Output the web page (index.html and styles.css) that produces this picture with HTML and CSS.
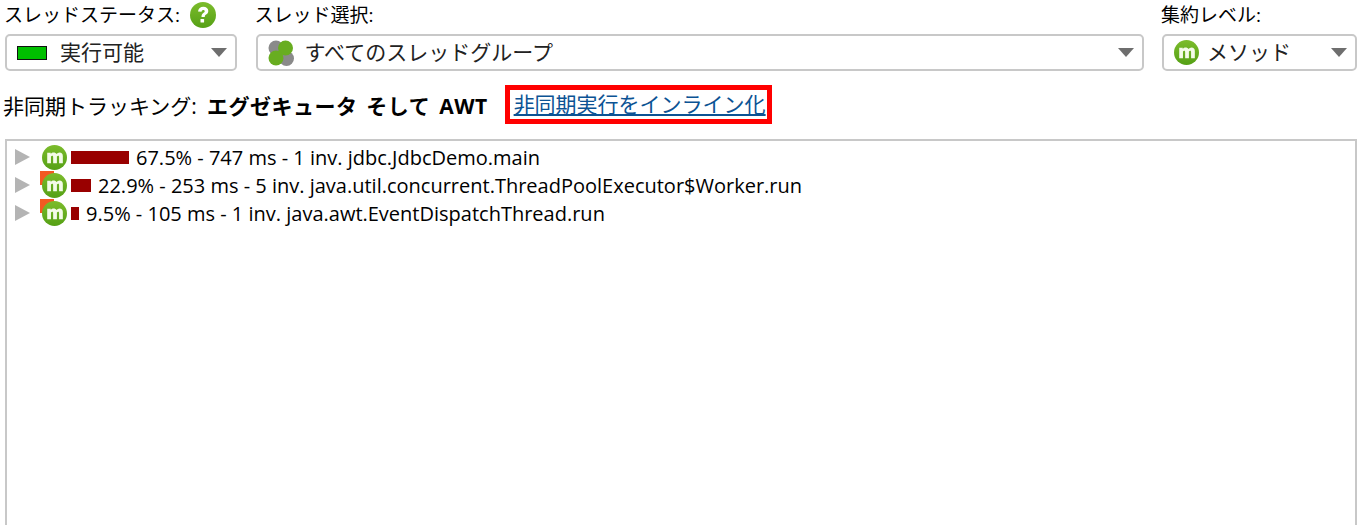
FILE: index.html
```html
<!DOCTYPE html>
<html lang="ja">
<head>
  <meta charset="UTF-8" />
  <title>スレッド</title>
  <link rel="stylesheet" href="styles.css">
</head>
<body>
  <svg class="defs" width="0" height="0" aria-hidden="true">
    <defs>
      <linearGradient id="green" x1="0" y1="0" x2="0" y2="1">
        <stop offset="0" stop-color="#7cbc2c"/>
        <stop offset="1" stop-color="#55a015"/>
      </linearGradient>
      <symbol id="method" viewBox="0 0 24 24">
        <circle cx="12" cy="12" r="12" fill="url(#green)"/>
        <path d="M5 17.500V7.500h3.400v1.100c.8-.9 1.700-1.300 2.800-1.300 1.200 0 2.100.5 2.600 1.400.9-.9 1.900-1.400 3-1.400 2.100 0 3.200 1.200 3.200 3.300v6.900h-3.600v-6c0-.8-.3-1.200-.9-1.200-.5 0-.9.300-1.200.7v6.500h-3.600v-6c0-.8-.3-1.200-.9-1.200-.5 0-.9.300-1.200.7v6.500z" fill="#f4fbe9"/>
      </symbol>
    </defs>
  </svg>

  <section class="filters">
    <div class="filter">
      <div class="filter-label">
        スレッドステータス:
        <svg class="help" viewBox="0 0 26 26" aria-hidden="true">
          <circle cx="13" cy="13" r="13" fill="url(#green)"/>
          <path d="M8 9.500c.3-3 2.500-4.700 5.300-4.700 3 0 5 1.700 5 4.200 0 1.800-1 2.800-2.200 3.600-1 .7-1.300 1.200-1.300 2.400h-3.300c-.1-2 .5-3 1.800-4 .9-.7 1.400-1.100 1.400-1.800 0-.8-.6-1.300-1.500-1.300-1 0-1.500.7-1.600 1.900z" fill="#fff"/>
          <rect x="10.500" y="17" width="3.600" height="3.600" rx=".6" fill="#fff"/>
        </svg>
      </div>
      <div class="combo">
        <span class="state-swatch"></span>
        <span class="combo-text">実行可能</span>
        <span class="caret"></span>
      </div>
    </div>
    <div class="filter">
      <div class="filter-label">スレッド選択:</div>
      <div class="combo">
        <svg class="groups" viewBox="0 0 26 26" aria-hidden="true">
          <circle cx="8" cy="8" r="7.500" fill="#8a8a8a"/>
          <circle cx="18.500" cy="18.500" r="7.500" fill="#8a8a8a"/>
          <circle cx="17.500" cy="8" r="7.500" fill="#68ad20"/>
          <circle cx="8" cy="18" r="7.500" fill="#68ad20"/>
        </svg>
        <span class="combo-text">すべてのスレッドグループ</span>
        <span class="caret"></span>
      </div>
    </div>
    <div class="filter">
      <div class="filter-label">集約レベル:</div>
      <div class="combo">
        <svg class="icon-m" aria-hidden="true"><use href="#method"/></svg>
        <span class="combo-text">メソッド</span>
        <span class="caret"></span>
      </div>
    </div>
  </section>

  <section class="async-row">
    <span>非同期トラッキング:</span>
    <b class="async-value">エグゼキュータ そして AWT</b>
    <span class="highlight"><a href="#">非同期実行をインライン化</a></span>
  </section>

  <section class="tree">
    <div class="node">
      <span class="arrow"></span>
      <span class="node-icon"><svg class="icon-m" aria-hidden="true"><use href="#method"/></svg></span>
      <span class="bar bar-1"></span>
      <span>67.5% - 747 ms - 1 inv. jdbc.JdbcDemo.main</span>
    </div>
    <div class="node">
      <span class="arrow"></span>
      <span class="node-icon async"><svg class="icon-m" aria-hidden="true"><use href="#method"/></svg></span>
      <span class="bar bar-2"></span>
      <span>22.9% - 253 ms - 5 inv. java.util.concurrent.ThreadPoolExecutor$Worker.run</span>
    </div>
    <div class="node">
      <span class="arrow"></span>
      <span class="node-icon async"><svg class="icon-m" aria-hidden="true"><use href="#method"/></svg></span>
      <span class="bar bar-3"></span>
      <span>9.5% - 105 ms - 1 inv. java.awt.EventDispatchThread.run</span>
    </div>
  </section>
</body>
</html>
```

FILE: styles.css
```css
* {
  margin: 0; padding: 0; box-sizing: border-box;
  font-family: 'Open Sans', 'Noto Sans CJK JP', sans-serif;
}
html, body {
  height: 525px;
  overflow: hidden;
}
body {
  display: flex;
  flex-direction: column;
  padding: 0 2px 0 5px;
  background: #fff;
  color: #000;
}
.defs {
  position: absolute;
}
/* top filters */
.filters {
  display: grid;
  grid-template-columns: 232px 888px 195px;
  column-gap: 18.5px;
}
.filter-label {
  display: flex;
  align-items: center;
  gap: 10px;
  height: 34px;
  margin-left: -1px;
  padding-bottom: 6px;
  font-size: 19px;
}
.help {
  width: 26px;
  height: 26px;
  margin-top: 2px;
}
.combo {
  display: flex;
  align-items: center;
  height: 37px;
  padding: 0 8px 0 10px;
  border: 2px solid #c8c8c8;
  border-radius: 5px;
  font-size: 21px;
}
.combo-text {
  flex: 1;
  padding-bottom: 3px;
  color: #222;
}
.state-swatch {
  width: 30px;
  height: 14px;
  margin-right: 13px;
  background: #00bf00;
  border: 1px solid #111;
}
.groups {
  width: 26px;
  height: 26px;
  margin-right: 11px;
}
.combo .icon-m {
  margin-right: 8px;
}
.caret {
  width: 0;
  height: 0;
  border-left: 8px solid transparent;
  border-right: 8px solid transparent;
  border-top: 9px solid #6e6e6e;
}
.icon-m {
  display: block;
  width: 25px;
  height: 25px;
}
/* async row */
.async-row {
  display: flex;
  align-items: center;
  height: 39px;
  margin-top: 14px;
  margin-left: -2px;
  font-size: 21px;
}
.async-value {
  margin-left: 10px;
  font-weight: 700;
  letter-spacing: .5px;
  word-spacing: 3px;
}
.highlight {
  display: block;
  height: 39px;
  margin-left: 17px;
  padding: 0 1px 0 4px;
  border: 5px solid #f00;
  line-height: 28px;
  white-space: nowrap;
}
.highlight a {
  color: #0b5394;
}
/* call tree */
.tree {
  flex: 1;
  margin-top: 15px;
  padding: 2px 0 0 8px;
  border: 2px solid #c8c8c8;
  border-bottom: 0;
  font-size: 20px;
}
.node {
  display: flex;
  align-items: center;
  height: 28px;
  white-space: nowrap;
}
.arrow {
  width: 0;
  height: 0;
  margin-right: 12px;
  border-top: 8px solid transparent;
  border-bottom: 8px solid transparent;
  border-left: 15px solid #b4b4b4;
}
.node-icon {
  position: relative;
  width: 25px;
  height: 25px;
  margin-right: 4px;
}
.node-icon .icon-m {
  position: relative;
}
.node-icon.async::before {
  content: "";
  position: absolute;
  left: -2px;
  top: -2px;
  width: 14px;
  height: 14px;
  background: #f25a22;
}
.bar {
  height: 13px;
  margin-right: 7px;
  background: #990000;
}
.bar-1 { width: 58px; }
.bar-2 { width: 20px; }
.bar-3 { width: 8px; }
```
